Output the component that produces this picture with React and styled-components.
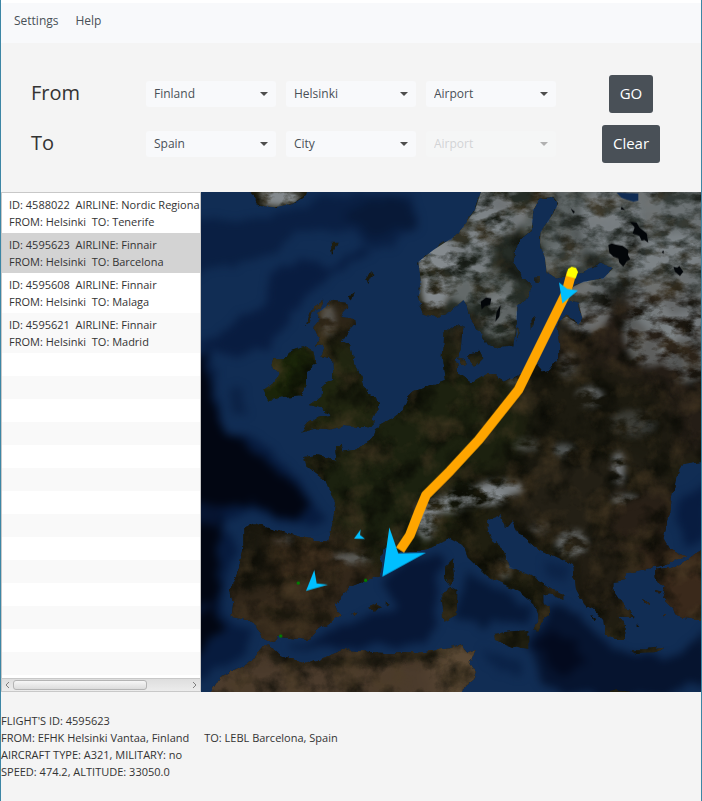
import React, { useState } from 'react';
import styled, { createGlobalStyle } from 'styled-components';

const GlobalStyle = createGlobalStyle`
  *, *::before, *::after { box-sizing: border-box; }
  body {
    margin: 0;
    background: #f4f4f4;
    color: #333;
    font-family: 'Segoe UI', 'Open Sans', 'Noto Sans', sans-serif;
    font-size: 11px;
    line-height: 17px;
  }
  button, select { font-family: inherit; }
`;

const Window = styled.div`
  display: flex;
  flex-direction: column;
  min-height: 100vh;
  border: solid #3c86a5;
  border-width: 0 1px;
`;

const MenuBar = styled.nav`
  display: flex;
  gap: 17px;
  height: 43px;
  padding: 0 13px;
  border-top: 3px solid #fff;
  background: #f8f9fb;
`;

const MenuButton = styled.button`
  padding: 0 0 5px;
  border: 0;
  background: none;
  color: #495057;
  font-size: 12px;
`;

const SearchForm = styled.form`
  display: grid;
  grid-template-columns: 105px repeat(3, minmax(60px, 130px)) minmax(60px, 1fr);
  grid-auto-rows: 50px;
  column-gap: 10px;
  align-items: center;
  padding: 26px 5px 23px 30px;
`;

const Heading = styled.span`
  padding-bottom: 2px;
  font-size: 20px;
  line-height: 28px;
  color: #333;
`;

const Field = styled.label`
  display: grid;
  align-items: center;
  opacity: ${(p) => (p.$off ? 0.4 : 1)};

  &::after {
    content: '';
    grid-area: 1 / 1;
    justify-self: end;
    margin-right: 8px;
    border: 4px solid transparent;
    border-top-color: #4d4d4d;
    border-bottom: 0;
    pointer-events: none;
  }
`;

const Select = styled.select`
  grid-area: 1 / 1;
  width: 100%;
  height: 26px;
  padding: 0 20px 1px 8px;
  border: 0;
  border-radius: 3px;
  appearance: none;
  background: #f8f9fb;
  color: #495057;
  font-size: 12px;
  opacity: 1;

  &:disabled { background: #f8f9fb; color: #a0a4a8; }
`;

const ActionButton = styled.button`
  justify-self: center;
  height: 38px;
  padding: 0 11px 2px;
  border: 0;
  border-radius: 3px;
  background: #495057;
  color: #fff;
  font-size: 15px;
  line-height: 22px;
`;

const Main = styled.main`
  display: flex;
`;

const ListPane = styled.section`
  display: flex;
  flex: 0 0 200px;
  flex-direction: column;
  overflow: hidden;
  border: 1px solid #c8c8c8;
  background: #fff;
`;

const FlightList = styled.ul`
  margin: 0;
  padding: 0;
  list-style: none;
`;

const FlightRow = styled.li`
  background: ${(p) => (p.$selected ? '#d3d3d3' : '#fff')};
  &:nth-child(even) { background: ${(p) => (p.$selected ? '#d3d3d3' : '#f9f9f9')}; }
`;

const FlightButton = styled.button`
  display: block;
  width: 100%;
  height: 40px;
  padding: 3px 0 3px 7px;
  overflow: hidden;
  border: 0;
  background: none;
  color: #333;
  font-size: 11px;
  line-height: 17px;
  text-align: left;
  white-space: pre;
`;

const EmptyRows = styled.div`
  flex: 1;
  background: repeating-linear-gradient(#fff 0 23px, #f9f9f9 23px 46px);
`;

const ScrollBar = styled.div`
  display: flex;
  align-items: center;
  height: 13px;
  border-top: 1px solid #c8c8c8;
  background: linear-gradient(#dedede, #ececec);
`;

const ScrollArrow = styled.button`
  display: flex;
  align-items: center;
  justify-content: center;
  width: 11px;
  height: 12px;
  padding: 0;
  border: 0;
  background: none;
`;

const ScrollTrack = styled.div`
  flex: 1;
`;

const ScrollThumb = styled.div`
  width: 76%;
  height: 10px;
  border: 1px solid #b4b4b4;
  border-radius: 3px;
  background: linear-gradient(#f6f6f6, #dcdcdc);
`;

const MapSvg = styled.svg`
  display: block;
  flex: 1;
  min-width: 0;
  aspect-ratio: 1;
  background: #102c54;
`;

const Details = styled.section`
  padding: 20px 0 12px;
`;

const Line = styled.p`
  display: flex;
  gap: 15px;
  margin: 0;
`;

const MAINLAND =
  'M845 0 L825 60 775 130 750 148 700 180 655 215 662 270 655 330 670 370 710 385 750 365 790 330 800 345 810 390 840 430 862 465 890 472 940 465 950 400 952 345 980 325 995 290 965 260 942 220 945 180 965 145 995 120 1000 60 1020 25 1060 20 1075 40 1060 70 1022 125 1020 160 1035 205 1040 245 1070 265 1120 260 1150 245 1200 220 1240 235 1210 265 1150 275 1120 290 1095 330 1135 335 1147 385 1135 403 1100 380 1080 390 1070 410 1078 460 1078 500 1050 540 1025 545 1010 525 1000 535 950 560 910 575 885 550 860 550 815 577 770 545 768 510 785 480 790 410 765 405 730 430 725 500 735 570 640 605 625 620 610 660 570 690 525 715 515 750 465 780 430 785 425 765 408 765 412 810 350 795 312 800 320 830 380 875 405 940 400 990 385 1055 340 1050 280 1035 190 1010 165 1000 130 1018 130 1080 115 1140 90 1200 100 1240 95 1280 160 1295 185 1340 205 1358 235 1340 330 1350 345 1325 390 1295 425 1275 405 1245 450 1190 540 1155 545 1130 540 1100 560 1075 600 1088 640 1085 690 1075 750 1043 790 1065 805 1105 865 1160 920 1185 965 1210 1000 1240 1012 1270 1012 1295 1000 1320 1015 1325 1030 1290 1048 1275 1045 1250 1030 1240 1030 1215 1050 1210 1090 1230 1090 1215 1040 1185 990 1155 930 1130 910 1080 875 1050 862 1015 865 990 905 975 915 1015 935 990 955 1030 1010 1075 1120 1125 1128 1200 1150 1240 1180 1255 1210 1290 1215 1330 1250 1350 1270 1350 1275 1310 1255 1280 1300 1280 1260 1230 1240 1200 1240 1175 1280 1170 1280 1150 1350 1135 1390 1130 1430 1105 1460 1100 1410 1080 1390 1045 1410 970 1415 925 1430 860 1450 825 1480 820 1510 815 V0 Z';

const ISLANDS = [
  'M400 332 L440 338 445 352 420 378 465 385 468 400 440 430 425 455 450 465 462 520 485 560 498 610 530 620 537 645 515 690 525 695 510 712 430 708 390 718 350 715 300 728 325 700 355 680 390 675 365 655 330 645 365 620 368 585 400 570 398 510 362 500 375 475 365 460 345 470 360 440 340 415 360 390 350 370 Z',
  'M268 485 L310 470 340 485 346 520 318 545 318 585 303 615 250 620 205 632 190 600 220 580 238 550 215 525 220 505 250 505 Z',
  'M140 0 L165 25 180 48 225 52 280 40 315 15 320 0 Z',
  'M345 345 L370 332 360 352 338 365 330 395 318 405 330 370 Z',
  'M498 265 L515 247 520 252 505 282 Z M443 315 L465 310 455 328 Z M392 158 L410 158 396 195 Z',
  'M882 1332 L920 1325 985 1320 985 1380 935 1370 885 1350 Z',
  'M720 1215 L755 1190 772 1200 770 1275 730 1295 725 1250 Z',
  'M735 1130 L760 1105 765 1160 750 1185 735 1165 Z',
  'M505 1250 L530 1238 542 1250 525 1268 Z M458 1273 L475 1268 465 1282 Z M555 1238 L572 1240 565 1247 Z',
  'M1295 1378 L1335 1378 1390 1370 1360 1390 1305 1392 Z',
  'M808 490 L840 485 850 505 825 530 808 510 Z M775 500 L798 505 795 528 780 520 Z',
  'M992 390 L1007 378 1000 405 992 420 Z M950 420 L957 415 952 455 Z M1003 263 L1020 262 1018 276 1003 274 Z',
  'M1230 1265 L1290 1262 1300 1282 1270 1275 Z M1330 1230 L1345 1240 1335 1245 Z M1365 1200 L1385 1205 1375 1212 Z M1385 1275 L1395 1275 1390 1285 Z M1310 1300 L1320 1310 1310 1310 Z M1175 1275 L1185 1285 1180 1290 Z',
  'M1510 1078 L1470 1105 1430 1130 1365 1140 1370 1180 1395 1190 1385 1220 1420 1255 1430 1280 1490 1290 1510 1290 Z',
  'M30 1515 L60 1465 150 1420 190 1370 205 1365 240 1400 330 1420 430 1380 560 1390 650 1390 750 1375 785 1365 800 1390 827 1380 810 1420 827 1445 820 1470 790 1495 785 1515 Z',
  'M1230 1506 L1250 1500 1290 1502 1290 1515 H1230 Z',
];

// cx, cy, rx, ry, colour
const TERRAIN = [
  [1330, 180, 420, 300, '#333a37'],
  [860, 150, 190, 330, '#252c26'],
  [1360, 560, 330, 260, '#241d16'],
  [1080, 720, 350, 210, '#1c1a10'],
  [720, 700, 260, 190, '#1c210f'],
  [560, 900, 230, 210, '#1b210f'],
  [280, 1190, 260, 200, '#32271a'],
  [280, 1120, 130, 70, '#3c2d1c'],
  [130, 1080, 90, 120, '#19170e'],
  [1180, 950, 270, 160, '#231f15'],
  [1360, 1000, 150, 110, '#281f16'],
  [1440, 1190, 140, 130, '#3a291b'],
  [1200, 1200, 140, 110, '#221d13'],
  [430, 1480, 520, 110, '#4b3b2c'],
  [790, 1440, 90, 110, '#5c4a36'],
  [420, 600, 120, 160, '#202510'],
  [260, 560, 110, 110, '#1a2509'],
  [410, 390, 80, 60, '#2e2518'],
];

// cx, cy, rx, ry, opacity
const SNOW = [
  [710, 220, 65, 70, 1], [705, 300, 42, 65, 1], [720, 240, 50, 60, 0.9], [790, 190, 90, 75, 0.85],
  [890, 60, 90, 80, 0.8], [860, 110, 60, 60, 0.7], [840, 290, 110, 60, 0.65], [900, 380, 60, 70, 0.65],
  [1140, 80, 180, 110, 0.55], [1370, 90, 230, 160, 0.7], [1080, 210, 70, 45, 0.6],
  [1430, 290, 150, 160, 0.7], [1160, 350, 75, 80, 0.7], [1350, 430, 80, 100, 0.6],
  [1460, 470, 80, 110, 0.55], [1220, 260, 70, 30, 0.6], [1170, 620, 40, 30, 0.7],
  [1300, 700, 70, 40, 0.3], [1105, 525, 30, 40, 0.4], [950, 575, 22, 22, 0.6],
  [680, 990, 32, 58, 0.9], [735, 945, 55, 24, 1], [830, 920, 95, 28, 1],
  [900, 895, 70, 24, 0.9], [240, 20, 60, 30, 1], [230, 22, 50, 26, 1], [385, 390, 22, 45, 0.45],
  [455, 1105, 60, 16, 0.6], [255, 1050, 32, 10, 0.4], [1255, 835, 20, 50, 0.8],
  [1275, 928, 40, 14, 0.7], [1090, 780, 36, 18, 0.6], [1115, 1060, 48, 42, 0.65],
  [1020, 1015, 30, 14, 0.4], [915, 1135, 18, 32, 0.5], [980, 765, 40, 18, 0.45],
];

const RELIEF = [
  'M150 1005 Q300 1040 510 1085 L530 1110 Q400 1090 300 1055 Z',
  'M120 1170 L310 1155 330 1175 130 1195 Z',
  'M180 1250 L380 1270 410 1295 220 1290 Z',
  'M1030 795 Q1140 750 1230 780 1320 840 1325 900 1300 940 1200 955 L1205 935 Q1290 920 1295 890 1270 820 1180 780 Z',
  'M1190 960 Q1210 1060 1380 1040 L1390 1055 Q1220 1080 1185 1000 Z',
  'M640 940 L780 890 Q880 850 970 860 L980 890 880 930 820 960 740 965 690 1040 660 1040 Z',
  'M760 1060 Q850 1090 890 1150 1000 1200 1025 1270 L1000 1270 Q980 1210 850 1150 Z',
  'M915 1000 Q1050 1050 1130 1110 L1150 1220 1220 1270 1200 1280 1140 1220 1125 1120 1000 1060 Z',
  'M200 1380 Q450 1420 700 1385 L760 1390 Q500 1450 220 1425 Z',
  'M1250 1090 H1330 L1320 1120 1250 1110 Z',
];

const ROUTE = '1115,247 1098,310 955,600 836,750 750,843 678,915 655,970 630,1035 600,1080';

const PLANES = [
  '1077,277 1102,297 1134,301 1087,340',
  '568,1012 595,1090 678,1088 547,1160',
  '343,1140 350,1180 384,1184 318,1203',
  '482,1018 480,1035 495,1047 462,1046',
];

const DESTINATIONS = [[295, 1179], [242, 1338], [497, 1171]];

function FlightMap() {
  return (
    <MapSvg viewBox="3 6 1500 1500" preserveAspectRatio="xMidYMid slice" role="img" aria-label="Flight map of Europe">
      <defs>
        <clipPath id="land-clip">
          <path d={MAINLAND} />
          {ISLANDS.map((d) => <path key={d} d={d} />)}
        </clipPath>
        <filter id="terrain" filterUnits="userSpaceOnUse" x="0" y="0" width="1510" height="1515" colorInterpolationFilters="sRGB">
          <feTurbulence type="fractalNoise" baseFrequency="0.035" numOctaves="3" seed="4" result="edge" />
          <feTurbulence type="fractalNoise" baseFrequency="0.012" numOctaves="6" seed="9" result="noise" />
          <feDisplacementMap in="SourceGraphic" in2="edge" scale="18" xChannelSelector="R" yChannelSelector="G" result="shape" />
          <feColorMatrix in="noise" values="0 0 0 0 0.03  0 0 0 0 0.035  0 0 0 0 0.015  2 0 0 0 -0.85" result="shade" />
          <feComposite in="shade" in2="shape" operator="in" result="relief" />
          <feColorMatrix in="noise" values="0 0 0 0 0.3  0 0 0 0 0.24  0 0 0 0 0.15  0 1.6 0 0 -0.75" result="light" />
          <feComposite in="light" in2="shape" operator="in" result="highlight" />
          <feMerge><feMergeNode in="shape" /><feMergeNode in="relief" /><feMergeNode in="highlight" /></feMerge>
        </filter>
        <filter id="snow" filterUnits="userSpaceOnUse" x="0" y="0" width="1510" height="1515" colorInterpolationFilters="sRGB">
          <feGaussianBlur in="SourceGraphic" stdDeviation="9" result="soft" />
          <feTurbulence type="fractalNoise" baseFrequency="0.016 0.026" numOctaves="5" seed="11" result="noise" />
          <feColorMatrix in="noise" values="0 0 0 0 1  0 0 0 0 1  0 0 0 0 1  3.2 0 0 0 -1" result="flakes" />
          <feComposite in="soft" in2="flakes" operator="in" />
        </filter>
        <filter id="sea" filterUnits="userSpaceOnUse" x="-60" y="-60" width="1630" height="1630" colorInterpolationFilters="sRGB">
          <feTurbulence type="fractalNoise" baseFrequency="0.014" numOctaves="5" seed="7" result="noise" />
          <feDisplacementMap in="SourceGraphic" in2="noise" scale="60" xChannelSelector="R" yChannelSelector="G" result="rough" />
          <feGaussianBlur in="rough" stdDeviation="12" />
        </filter>
        <filter id="soft" filterUnits="userSpaceOnUse" x="-60" y="-60" width="1630" height="1630" colorInterpolationFilters="sRGB">
          <feGaussianBlur stdDeviation="30" />
        </filter>
        <filter id="ridge" filterUnits="userSpaceOnUse" x="0" y="0" width="1510" height="1515" colorInterpolationFilters="sRGB">
          <feGaussianBlur stdDeviation="8" />
        </filter>
      </defs>

      <rect width="1510" height="1515" fill="#112d54" />
      <g filter="url(#sea)">
        <path d="M-60 90 L180 90 340 30 430 20 640 20 650 110 560 170 430 120 300 120 220 190 60 230 -60 290 Z" fill="#071a3c" opacity=".7" />
        <path d="M-60 470 L60 430 190 350 215 250 300 210 400 230 500 160 520 180 380 275 300 310 270 410 200 480 60 490 Z" fill="#081b3e" opacity=".9" />
        <path d="M430 70 L600 20 660 100 500 140 Z" fill="#061531" opacity=".6" />
        <path d="M90 600 L130 590 140 670 90 680 Z" fill="#081c3f" opacity=".7" />
        <path d="M-60 490 L40 490 60 620 80 740 190 760 280 850 350 950 365 1000 270 1000 150 950 80 1000 105 1090 70 1210 80 1280 155 1320 140 1390 50 1440 -60 1500 Z" fill="#071b3e" />
        <path d="M-60 500 L20 500 40 620 70 740 180 790 265 870 330 950 290 985 140 935 60 970 50 1140 50 1230 60 1330 -60 1430 Z" fill="#020612" />
        <path d="M-60 940 L100 960 40 1000 -60 1000 Z M-60 1240 L60 1250 -60 1290 Z" fill="#07183a" opacity=".8" />
        <path d="M545 1195 L600 1140 720 1090 715 1200 690 1350 560 1375 380 1370 260 1380 400 1315 530 1270 600 1240 Z" fill="#071736" />
        <path d="M790 1150 L900 1195 1000 1260 990 1300 870 1305 775 1290 Z" fill="#071938" />
        <path d="M985 1360 L1040 1270 1090 1250 1170 1300 1240 1380 1400 1410 1520 1310 1520 1480 1240 1540 1040 1490 Z" fill="#06142f" />
        <path d="M1000 1370 L1070 1310 1130 1350 1150 1420 1080 1450 Z" fill="#030a1e" />
        <path d="M1030 1115 L1100 1120 1100 1170 1040 1170 Z" fill="#0c2347" />
        <path d="M1430 1000 L1440 930 1520 890 1520 1060 1450 1060 Z" fill="#081c40" />
        <path d="M840 1390 L950 1410 970 1450 880 1420 Z" fill="#0a2145" />
      </g>

      <g filter="url(#terrain)">
        <g clipPath="url(#land-clip)">
          <rect width="1510" height="1515" fill="#1f1e10" />
          <g filter="url(#soft)">
            {TERRAIN.map(([cx, cy, rx, ry, fill]) => (
              <ellipse key={`${cx}-${cy}`} cx={cx} cy={cy} rx={rx} ry={ry} fill={fill} />
            ))}
          </g>
          <g filter="url(#ridge)" fill="#0c0e06" opacity=".6">
            {RELIEF.map((d) => <path key={d} d={d} />)}
          </g>
        </g>
      </g>

      <g clipPath="url(#land-clip)">
        <g filter="url(#snow)">
          {SNOW.map(([cx, cy, rx, ry, opacity]) => (
            <ellipse key={`${cx}-${cy}`} cx={cx} cy={cy} rx={rx} ry={ry} fill="#848a8e" opacity={opacity} />
          ))}
        </g>
      </g>

      <g fill="#030609">
        <path d="M1225 165 L1235 160 1248 164 1268 168 1285 180 1284 195 1291 208 1280 214 1270 230 1258 218 1255 205 1240 200 1228 188 Z" />
        <path d="M1290 95 L1310 98 1318 112 1340 130 1345 158 1333 150 1325 152 1318 138 1298 130 1304 112 Z" />
        <path d="M1420 230 L1432 233 1438 228 1450 245 1440 258 1425 245 Z" />
        <path d="M842 335 L858 322 874 325 870 345 855 348 845 358 Z" />
        <path d="M890 365 L902 345 898 380 886 395 Z" />
        <path d="M1112 55 L1125 65 1120 70 Z M1265 50 L1275 60 1262 58 Z M1385 185 L1392 182 1390 192 Z" />
      </g>
      <path d="M1250 8 L1315 10 1315 32 1300 35 1265 24 Z" fill="#102c54" />

      <polyline points={ROUTE} fill="none" stroke="#ffa500" strokeWidth="29" strokeLinejoin="round" />
      <path d="M1104 237 L1115 230 1128 234 1134 246 1127 265 1099 258 Z" fill="#ff0" />
      {DESTINATIONS.map(([cx, cy]) => <circle key={cx} cx={cx} cy={cy} r="5" fill="#008000" />)}
      {PLANES.map((points) => <polygon key={points} points={points} fill="#00bfff" />)}
    </MapSvg>
  );
}

const FLIGHTS = [
  { id: '4588022', airline: 'Nordic Regional Airlines', to: 'Tenerife' },
  { id: '4595623', airline: 'Finnair', to: 'Barcelona' },
  { id: '4595608', airline: 'Finnair', to: 'Malaga' },
  { id: '4595621', airline: 'Finnair', to: 'Madrid' },
];

function Choice({ label, value, disabled }) {
  return (
    <Field $off={disabled}>
      <Select aria-label={label} disabled={disabled} defaultValue={value}>
        <option>{value}</option>
      </Select>
    </Field>
  );
}

export default function App() {
  const [selected, setSelected] = useState('4595623');
  return (
    <>
      <GlobalStyle />
      <Window>
        <MenuBar>
          <MenuButton>Settings</MenuButton>
          <MenuButton>Help</MenuButton>
        </MenuBar>
        <SearchForm onSubmit={(e) => e.preventDefault()}>
          <Heading>From</Heading>
          <Choice label="From country" value="Finland" />
          <Choice label="From city" value="Helsinki" />
          <Choice label="From airport" value="Airport" />
          <ActionButton type="submit">GO</ActionButton>
          <Heading>To</Heading>
          <Choice label="To country" value="Spain" />
          <Choice label="To city" value="City" />
          <Choice label="To airport" value="Airport" disabled />
          <ActionButton type="reset">Clear</ActionButton>
        </SearchForm>
        <Main>
          <ListPane>
            <FlightList>
              {FLIGHTS.map((f) => (
                <FlightRow key={f.id} $selected={f.id === selected}>
                  <FlightButton onClick={() => setSelected(f.id)}>
                    {`ID: ${f.id}  AIRLINE: ${f.airline}\nFROM: Helsinki  TO: ${f.to}`}
                  </FlightButton>
                </FlightRow>
              ))}
            </FlightList>
            <EmptyRows />
            <ScrollBar>
              <ScrollArrow aria-label="Scroll left">
                <svg width="5" height="8" fill="none" stroke="#808080"><path d="M4 1 L1 4 L4 7" /></svg>
              </ScrollArrow>
              <ScrollTrack><ScrollThumb /></ScrollTrack>
              <ScrollArrow aria-label="Scroll right">
                <svg width="5" height="8" fill="none" stroke="#808080"><path d="M1 1 L4 4 L1 7" /></svg>
              </ScrollArrow>
            </ScrollBar>
          </ListPane>
          <FlightMap />
        </Main>
        <Details>
          <Line>FLIGHT'S ID: 4595623</Line>
          <Line><span>FROM: EFHK Helsinki Vantaa, Finland</span><span>TO: LEBL Barcelona, Spain</span></Line>
          <Line>AIRCRAFT TYPE: A321, MILITARY: no</Line>
          <Line>SPEED: 474.2, ALTITUDE: 33050.0</Line>
        </Details>
      </Window>
    </>
  );
}
